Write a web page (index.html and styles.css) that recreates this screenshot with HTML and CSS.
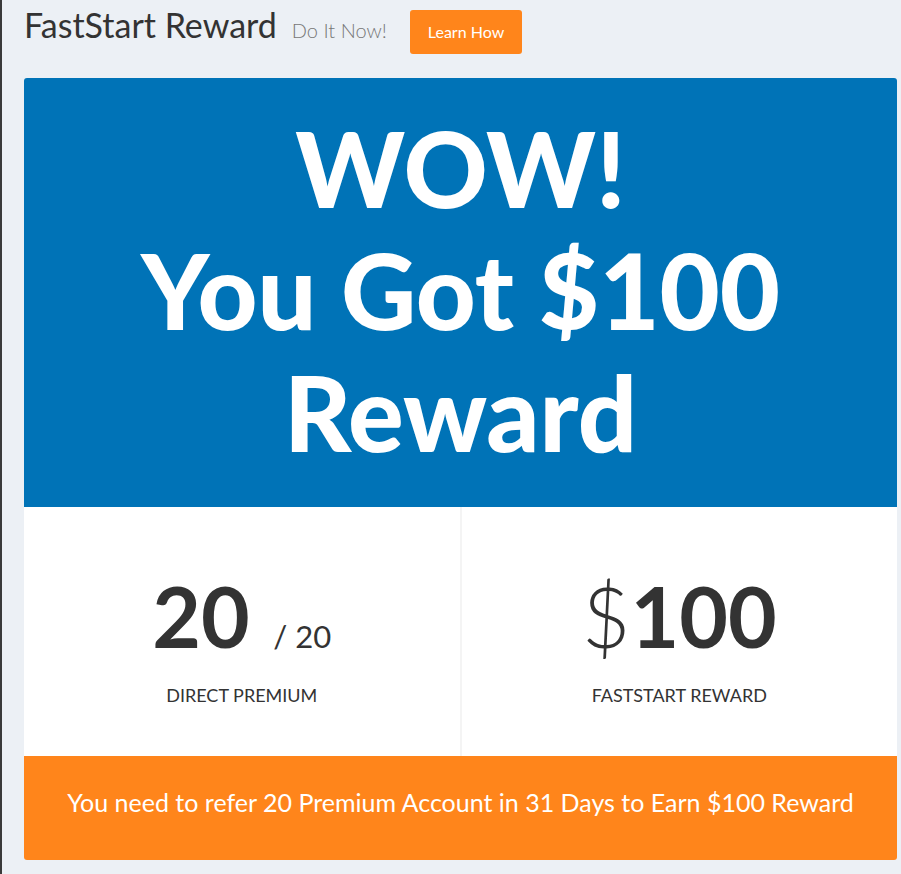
FILE: index.html
```html
<!DOCTYPE html>
<html lang="en">
<head>
	<meta charset="UTF-8">
	<title>FastStart Reward</title>
	<link rel="stylesheet" href="styles.css">
</head>
<body>
	<div class="wrapper">
		<div class="content_header">
			<h1>FastStart Reward</h1>
			<span class="sub">Do It Now!</span>
			<a class="btn_learn" href="#">Learn How</a>
		</div>

		<div class="reward_box">
			<div class="reward_head">
				WOW!<br>You Got $100<br>Reward
			</div>
			<div class="reward_stats">
				<div class="stat">
					<div class="stat_num"><b>20</b> <span class="small">/ 20</span></div>
					<div class="stat_label">DIRECT PREMIUM</div>
				</div>
				<div class="stat">
					<div class="stat_num"><span class="dollar">$</span><b>100</b></div>
					<div class="stat_label">FASTSTART REWARD</div>
				</div>
			</div>
			<div class="reward_foot">
				You need to refer 20 Premium Account in 31 Days to Earn $100 Reward
			</div>
		</div>
	</div>
</body>
</html>
```

FILE: styles.css
```css
*{
	margin: 0;
	padding: 0;
	box-sizing: border-box;
}
html, body{
	height: 100%;
}
body{
	background: #ecf0f5;
	font-family: "Lato", "Open Sans", sans-serif;
	color: #333;
	border-left: 2px solid #3a3a3a;
}
a{
	text-decoration: none;
}
.wrapper{
	padding: 0 4px 0 22px;
}
.content_header{
	display: flex;
	align-items: baseline;
	height: 78px;
	padding-top: 4px;
}
.content_header h1{
	font-size: 34px;
	line-height: 41px;
	font-weight: 400;
	color: #333;
}
.content_header .sub{
	font-size: 20px;
	font-weight: 300;
	color: #777;
	margin-left: 15px;
}
.btn_learn{
	display: block;
	margin-left: 23px;
	margin-top: 1px;
	background: #ff851b;
	color: #fff;
	font-size: 16px;
	line-height: 44px;
	padding: 0 18px;
	border-radius: 3px;
}
.reward_box{
	border-radius: 3px;
	overflow: hidden;
}
.reward_head{
	background: #0073b7;
	color: #fff;
	text-align: center;
	font-weight: 900;
	font-size: 104px;
	line-height: 122px;
	height: 429px;
	padding-top: 29px;
}
.reward_stats{
	display: flex;
	background: #fff;
	height: 249px;
}
.stat{
	flex: 1;
	text-align: center;
	padding-top: 64px;
}
.stat + .stat{
	border-left: 2px solid #f4f4f4;
}
.stat_num{
	font-size: 84px;
	line-height: 90px;
	color: #333;
}
.stat_num .small{
	font-size: 31px;
	line-height: 1;
	margin-left: 2px;
}
.stat_num .dollar{
	font-weight: 300;
}
.stat_label{
	font-size: 18px;
	margin-top: 23px;
}
.reward_foot{
	background: #ff851b;
	color: #fff;
	text-align: center;
	font-size: 25px;
	height: 104px;
	line-height: 92px;
}
```
